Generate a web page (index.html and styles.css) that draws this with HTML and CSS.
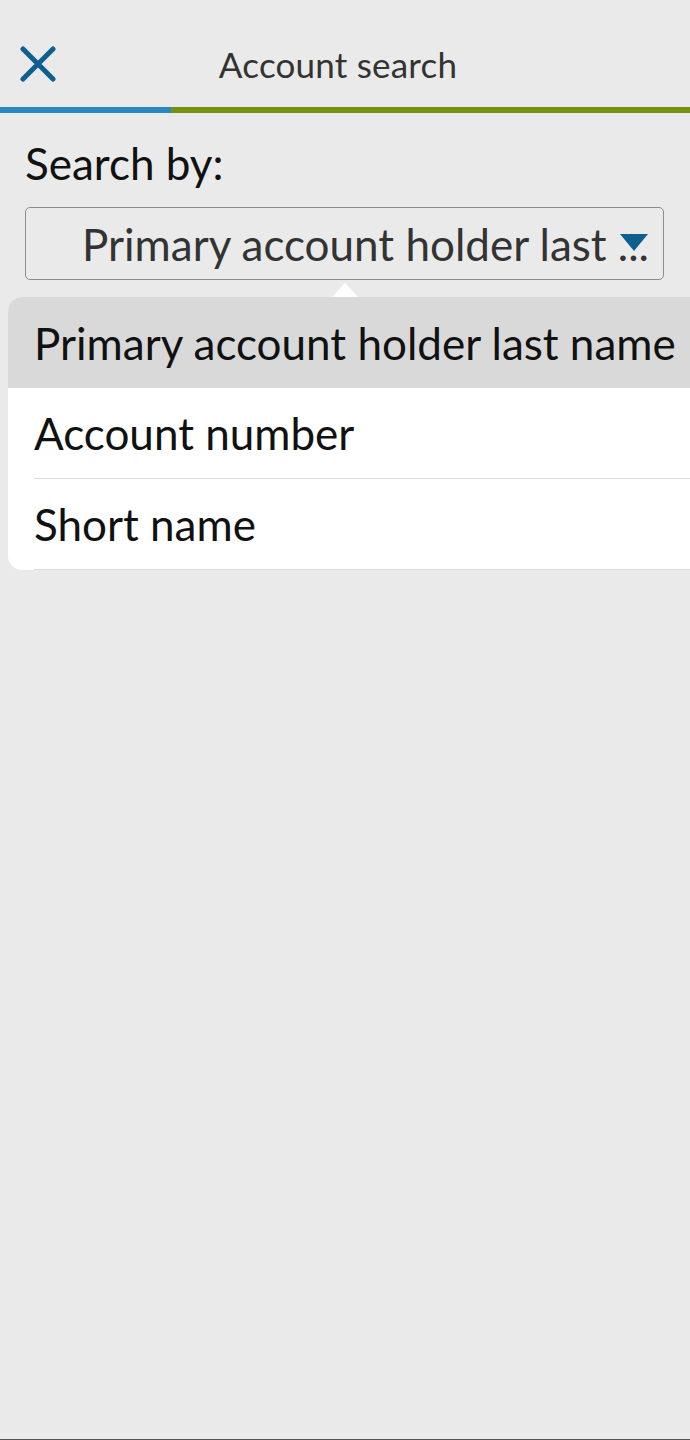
FILE: index.html
```html
<!DOCTYPE html>
<html lang="en">
<head>
    <meta charset="UTF-8">
    <meta name="viewport" content="width=device-width, initial-scale=1.0">
    <title>Account search</title>
    <link rel="stylesheet" href="styles.css">
</head>
<body>
    <div class="screen">
        <!-- Top bar -->
        <header class="top-bar">
            <a href="#" class="close-btn" aria-label="Close">
                <svg width="36" height="36" viewBox="0 0 36 36">
                    <path d="M3 3 L33 33 M33 3 L3 33" stroke="#0f5f8e" stroke-width="5" stroke-linecap="round" fill="none"/>
                </svg>
            </a>
            <h1 class="title">Account search</h1>
            <span></span>
        </header>
        <div class="progress">
            <div class="progress-done" style="width: 24.8%"></div>
            <div class="progress-rest"></div>
        </div>

        <!-- Search by select -->
        <div class="search-by">
            <p class="label">Search by:</p>
            <div class="select-box">
                <span class="select-value">Primary account holder last ...</span>
                <span class="select-arrow"></span>
            </div>
        </div>

        <!-- Open dropdown -->
        <div class="dropdown">
            <span class="notch"></span>
            <ul class="options">
                <li class="option selected"><span>Primary account holder last name</span></li>
                <li class="option"><span>Account number</span></li>
                <li class="option"><span>Short name</span></li>
            </ul>
        </div>

        <div class="bottom-edge"></div>
    </div>
</body>
</html>
```

FILE: styles.css
```css
* {
    margin: 0;
    padding: 0;
    box-sizing: border-box;
    font-family: Lato, "Open Sans", sans-serif;
}

body {
    background: #eaeaea;
}

.screen {
    display: flex;
    flex-direction: column;
    min-height: 100vh;
}

.top-bar {
    display: grid;
    grid-template-columns: 1fr auto 1fr;
    align-items: center;
    height: 107px;
    padding: 20px 20px 0 20px;
}

.close-btn {
    display: flex;
    width: 36px;
    height: 36px;
}

.title {
    font-size: 35px;
    font-weight: 400;
    color: #333;
    margin-right: 14px;
    letter-spacing: 0.2px;
}

.progress {
    display: flex;
    height: 6px;
}

.progress-done {
    background: #2a87c0;
}

.progress-rest {
    flex: 1;
    background: #76900f;
}

.search-by {
    padding: 25px 26px 0 25px;
}

.label {
    font-size: 44px;
    line-height: 50px;
    color: #111;
}

.select-box {
    position: relative;
    display: flex;
    align-items: center;
    height: 73px;
    margin-top: 19px;
    padding: 0 0 0 56px;
    border: 1.5px solid #8c8c8c;
    border-radius: 5px;
}

.select-value {
    white-space: nowrap;
    font-size: 44px;
    color: #333;
}

.select-arrow {
    position: absolute;
    right: 15px;
    top: 26px;
    width: 0;
    height: 0;
    border-left: 14px solid transparent;
    border-right: 14px solid transparent;
    border-top: 17px solid #0f5f8e;
}

.dropdown {
    position: relative;
    margin: 17px 0 0 8px;
}

.notch {
    position: absolute;
    left: 324px;
    top: -14px;
    width: 0;
    height: 0;
    border-left: 13px solid transparent;
    border-right: 13px solid transparent;
    border-bottom: 14px solid #fff;
}

.options {
    list-style: none;
    background: #fff;
    border-radius: 14px 0 0 14px;
    overflow: hidden;
}

.option {
    height: 91px;
    padding-left: 26px;
    font-size: 44px;
    color: #111;
}

.option span {
    display: flex;
    align-items: center;
    height: 100%;
    border-bottom: 1px solid #dedede;
}

.option.selected {
    background: #d9d9d9;
}

.option.selected span {
    border-bottom: none;
}

.bottom-edge {
    margin-top: auto;
    height: 1px;
    background: #555;
}
```
